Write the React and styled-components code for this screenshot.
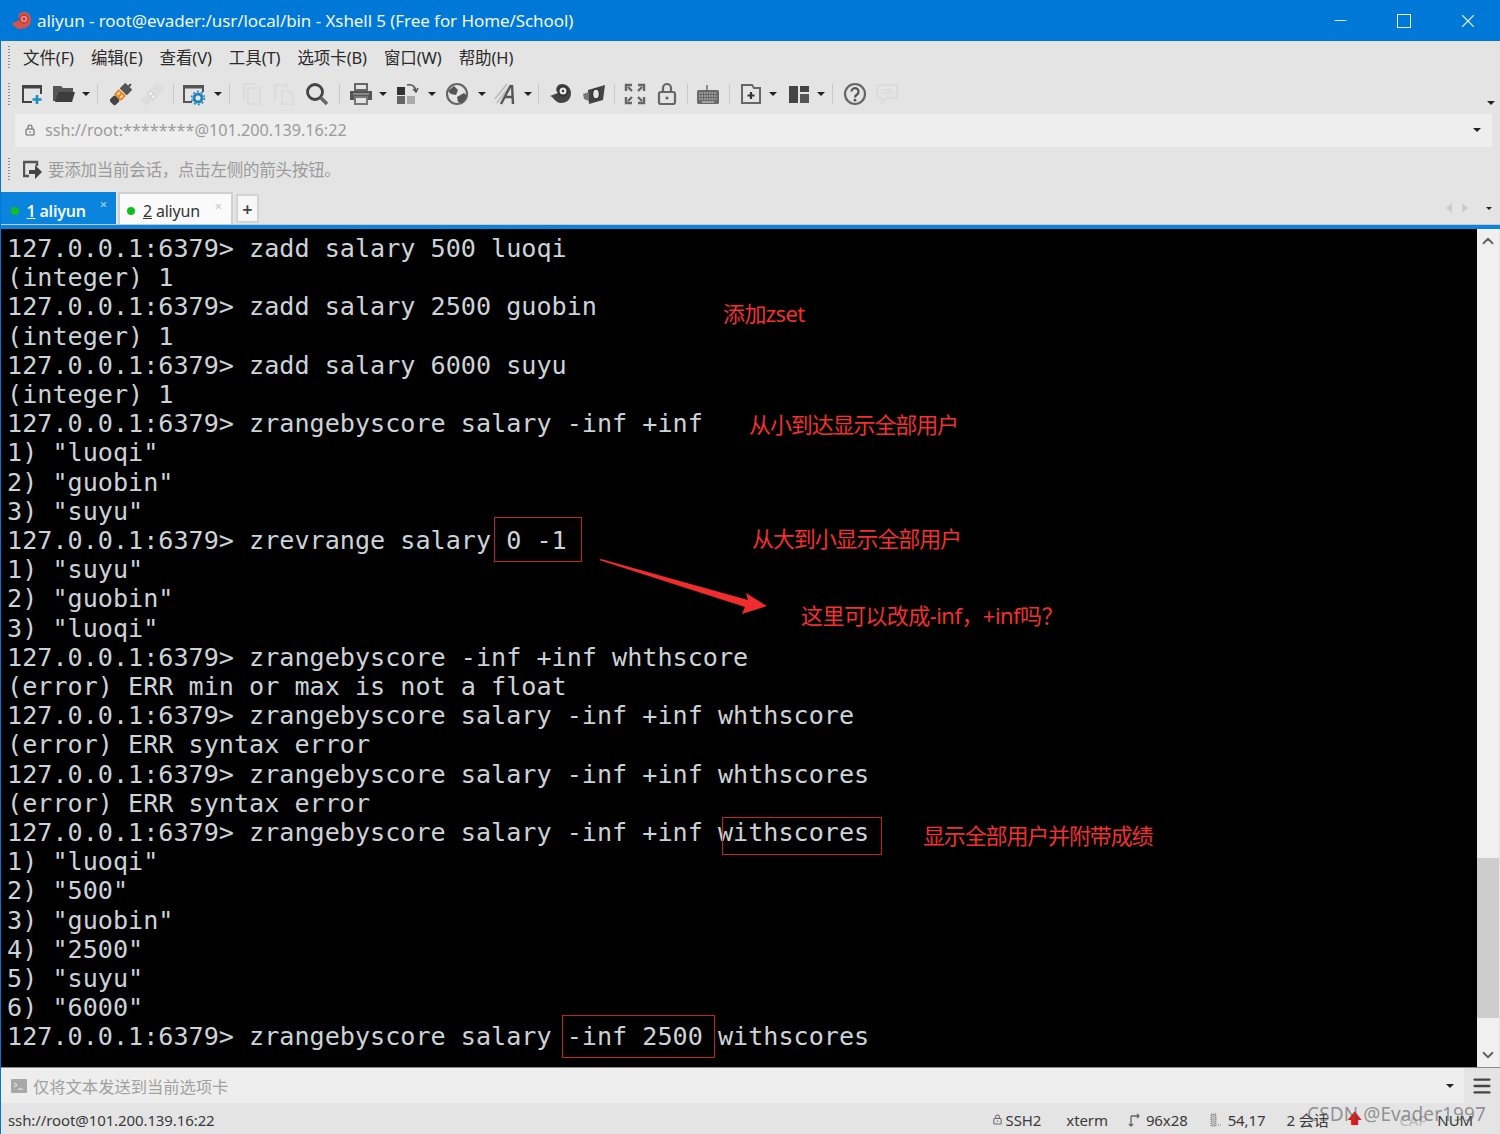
import React from 'react';
import styled, { createGlobalStyle } from 'styled-components';
import { Minus, X, ChevronUp, ChevronDown, Menu as MenuIcon } from 'lucide-react';

const UI_FONT = '"Noto Sans", "Noto Sans CJK SC", sans-serif';

const GlobalStyle = createGlobalStyle`
  html, body { margin: 0; padding: 0; background: #e4e4e4; }
  body { font-family: ${UI_FONT}; }
`;

const Window = styled.div`
  width: 1500px;
  height: 1134px;
  display: flex;
  flex-direction: column;
  overflow: hidden;
  background: #e4e4e4;
  border-left: 1px solid #0078d7;
  box-sizing: border-box;
`;

const TitleBar = styled.div`
  height: 41px;
  flex: none;
  margin-left: -1px;
  background: #0078d7;
  color: #f2f8fd;
  display: flex;
  align-items: center;
  padding-left: 11px;
  font-size: 17px;
  letter-spacing: -0.07px;
`;

const TitleText = styled.span`
  margin-left: 5px;
  flex: 1;
`;

const WinButton = styled.div`
  width: 64px;
  display: flex;
  justify-content: center;
  color: #e6f2fc;
`;

const WinSquare = styled.div`
  width: 14px;
  height: 14px;
  box-sizing: border-box;
  border: 1px solid #e6f2fc;
`;

const Bar = styled.div`
  height: ${(p) => p.$h}px;
  flex: none;
  display: flex;
  align-items: center;
  position: relative;
  padding-left: ${(p) => p.$pl || 0}px;
  padding-top: ${(p) => p.$pt || 0}px;
  box-sizing: border-box;
`;

const Grip = styled.div`
  width: 2px;
  height: ${(p) => p.$h}px;
  flex: none;
  background-image: linear-gradient(#8d8d8d 50%, transparent 50%);
  background-size: 2px 3px;
  margin-right: ${(p) => p.$mr}px;
`;

const MenuItem = styled.span`
  font-size: 16.5px;
  color: #2b2b2b;
  margin-right: 17px;
  letter-spacing: -0.1px;
`;

const ToolSlot = styled.div`
  width: ${(p) => p.$w}px;
  height: 26px;
  flex: none;
  display: flex;
  align-items: center;
  justify-content: center;
`;

const ToolSep = styled.div`
  width: 1px;
  height: 20px;
  flex: none;
  background: #c9c9c9;
  margin: 0 ${(p) => p.$m || 10}px;
`;

const Caret = styled.i`
  display: block;
  flex: none;
  width: 0;
  height: 0;
  border-left: ${(p) => p.$s || 4}px solid transparent;
  border-right: ${(p) => p.$s || 4}px solid transparent;
  border-top: ${(p) => p.$s || 4}px solid #222;
  margin-left: ${(p) => p.$ml || 0}px;
  margin-right: ${(p) => p.$mr || 0}px;
`;

const OverflowCaret = styled(Caret)`
  position: absolute;
  right: 5px;
  bottom: ${(p) => p.$b}px;
`;

const AddressField = styled.div`
  width: 1477px;
  height: 33px;
  margin-left: 14px;
  flex: none;
  background: #eeeeee;
  display: flex;
  align-items: center;
  padding: 0 11px 0 9px;
  box-sizing: border-box;
  color: #9a9a9a;
  font-size: 16.2px;
  letter-spacing: 0;
`;

const AddressText = styled.span`
  flex: 1;
  margin-left: 9px;
`;

const HintText = styled.span`
  color: #9b9b9b;
  font-size: 16.5px;
  letter-spacing: -0.25px;
  margin-left: 5px;
  margin-top: -2px;
`;

const TabStrip = styled.div`
  height: 33px;
  flex: none;
  display: flex;
  align-items: stretch;
  position: relative;
  border-bottom: 1px solid #c8c8c8;
  box-sizing: border-box;
`;

const Tab = styled.div`
  width: 115px;
  margin-right: 2px;
  box-sizing: border-box;
  display: flex;
  align-items: center;
  padding: ${(p) => (p.$active ? '5px 0 0 9.5px' : '3px 0 0 7px')};
  position: relative;
  font-size: 16px;
  letter-spacing: -0.2px;
  background: ${(p) => (p.$active ? '#0a84dc' : '#fafafa')};
  color: ${(p) => (p.$active ? '#f3f9fe' : '#333')};
  font-weight: ${(p) => (p.$active ? 600 : 400)};
  border: ${(p) => (p.$active ? 'none' : '2px solid #d0d0d0')};
  border-bottom: none;
`;

const Dot = styled.span`
  width: 8px;
  height: 8px;
  border-radius: 50%;
  background: #10c020;
  margin-right: 8px;
  flex: none;
`;

const TabClose = styled.span`
  position: absolute;
  right: 9px;
  top: 6px;
  font-size: 13px;
  line-height: 1;
  color: ${(p) => (p.$active ? '#9fd0f2' : '#c8c8c8')};
`;

const AddTab = styled.div`
  width: 23px;
  height: 29px;
  margin-left: 1px;
  align-self: flex-start;
  margin-top: 2px;
  box-sizing: border-box;
  background: #f7f7f7;
  border: 2px solid #d4d4d4;
  display: flex;
  align-items: center;
  justify-content: center;
  font-size: 18px;
  font-weight: 600;
  color: #444;
`;

const TabArrows = styled.div`
  position: absolute;
  right: 8px;
  top: 11px;
  display: flex;
  align-items: center;
`;

const SideArrow = styled.i`
  display: block;
  width: 0;
  height: 0;
  border-top: 5px solid transparent;
  border-bottom: 5px solid transparent;
  ${(p) => (p.$left ? 'border-right: 6px solid #cbcbcb;' : 'border-left: 6px solid #cbcbcb;')}
  margin-right: ${(p) => p.$mr}px;
`;

const BlueRule = styled.div`
  height: 4px;
  flex: none;
  background: #0a84dc;
  margin-left: -1px;
`;

const TermRow = styled.div`
  height: 838px;
  flex: none;
  display: flex;
  position: relative;
`;

const Terminal = styled.pre`
  flex: 1;
  margin: 0;
  padding: 5px 0 0 6px;
  background: #000;
  color: #ccd3d8;
  font-family: "DejaVu Sans Mono", monospace;
  font-size: 25.14px;
  line-height: 29.2px;
  overflow: hidden;
`;

const ScrollBar = styled.div`
  width: 22px;
  flex: none;
  margin-right: 1px;
  background: #f0f0f0;
  display: flex;
  flex-direction: column;
  align-items: center;
  justify-content: space-between;
  position: relative;
  color: #606060;
  padding: 3px 0;
  box-sizing: border-box;
`;

const ScrollThumb = styled.div`
  position: absolute;
  left: 0;
  right: 0;
  top: 629px;
  height: 160px;
  background: #cdcdcd;
`;

const RedBox = styled.div`
  position: absolute;
  left: ${(p) => p.$x}px;
  top: ${(p) => p.$y}px;
  width: ${(p) => p.$w}px;
  height: ${(p) => p.$h}px;
  border: 1px solid #c22024;
  box-sizing: border-box;
`;

const Note = styled.div`
  position: absolute;
  left: ${(p) => p.$x}px;
  top: ${(p) => p.$y}px;
  color: #f23030;
  font-size: 22px;
  line-height: 30px;
  letter-spacing: ${(p) => p.$ls}px;
  white-space: nowrap;
`;

const ArrowMark = styled.svg`
  position: absolute;
  left: 595px;
  top: 328px;
`;

const ComposeBar = styled.div`
  height: 36px;
  flex: none;
  display: flex;
  align-items: stretch;
  border-top: 1px solid #8a8a8a;
  box-sizing: border-box;
`;

const ComposeField = styled.div`
  flex: 1;
  background: #eeeeee;
  display: flex;
  align-items: center;
  padding: 1px 10px 0 10px;
  color: #a0a0a0;
  font-size: 16.3px;
  letter-spacing: 0;
`;

const ComposeText = styled.span`
  flex: 1;
  margin-left: 6px;
`;

const ComposeMenu = styled.div`
  width: 36px;
  flex: none;
  display: flex;
  align-items: center;
  justify-content: center;
  color: #444;
`;

const StatusBar = styled.div`
  height: 31px;
  flex: none;
  display: flex;
  align-items: center;
  padding: 2px 0 0 7px;
  box-sizing: border-box;
  font-size: 15px;
  letter-spacing: -0.1px;
  color: #3a3a3a;
  position: relative;
`;

const StatusPath = styled.span`
  flex: 1;
`;

const StatusItem = styled.span`
  display: flex;
  align-items: center;
  gap: ${(p) => p.$gap || 0}px;
  margin-right: ${(p) => p.$mr}px;
  color: ${(p) => p.$color || 'inherit'};
`;

const Watermark = styled.div`
  position: absolute;
  right: 14px;
  top: -2px;
  font-size: 19px;
  letter-spacing: 0.1px;
  color: rgba(90, 90, 90, 0.62);
  white-space: nowrap;
`;

const Glyph = ({ w = 24, h = 24, children, ...rest }) => (
  <svg width={w} height={h} viewBox={`0 0 ${w} ${h}`} fill="none" {...rest}>
    {children}
  </svg>
);

const Logo = () => (
  <Glyph w={21} h={20}>
    <path d="M0 13c3 0 4 5 9 5 6 0 11-3 11-9 0-5-3-8-7-8-4 0-6 3-5 6 1 2 4 2 5 0" fill="#d9534a" />
    <circle cx="13" cy="8" r="4" fill="#ee8a80" stroke="#b23a34" strokeWidth="1.4" />
    <circle cx="13" cy="8" r="1.4" fill="#b23a34" />
  </Glyph>
);

const NewIcon = () => (
  <Glyph>
    <path d="M12 20H3V4h18v8" stroke="#444" strokeWidth="2" />
    <path d="M3 5h18" stroke="#444" strokeWidth="3" />
    <path d="M17 13v9M12.5 17.5h9" stroke="#1b8fc4" strokeWidth="2.6" />
  </Glyph>
);

const OpenIcon = () => (
  <Glyph>
    <path d="M1 4h8l2 2h10v4H6l-2 9H1z" fill="#555" />
    <path d="M6 10h17l-3 10H3z" fill="#3d3d3d" />
  </Glyph>
);

const PlugIcon = ({ on }) => (
  <Glyph>
    <g transform="rotate(-45 12 12)">
      <rect x="-1" y="8" width="8" height="8" rx="2.5" fill={on ? '#444' : '#dcdcdc'} />
      <rect x="7" y="7" width="7" height="10" fill={on ? '#ee8a22' : '#d8d8d8'} />
      <path d="M9 10h3M9 14h3" stroke="#fff" strokeWidth="1.4" />
      <rect x="15" y="7" width="8" height="10" rx="1" fill={on ? '#555' : '#dedede'} />
      <path d="M23 12h3" stroke={on ? '#444' : '#ddd'} strokeWidth="2" />
    </g>
  </Glyph>
);

const PropsIcon = () => (
  <Glyph>
    <path d="M10 20H2V4h19v6" stroke="#555" strokeWidth="2" />
    <path d="M2 5h19" stroke="#555" strokeWidth="3" />
    <circle cx="16" cy="16" r="4" stroke="#2284bb" strokeWidth="3" />
    <circle cx="16" cy="16" r="6.5" stroke="#2284bb" strokeWidth="1.5" strokeDasharray="2 2.1" />
  </Glyph>
);

const CopyIcon = () => (
  <Glyph>
    <path d="M4 18V2h11M8 6h12v16H8z" stroke="#dcdcdc" strokeWidth="2" />
  </Glyph>
);

const PasteIcon = () => (
  <Glyph>
    <path d="M3 18V3h11v4" stroke="#dcdcdc" strokeWidth="3" />
    <path d="M10 9h7l4 4v9H10z" stroke="#dcdcdc" strokeWidth="2" />
  </Glyph>
);

const FindIcon = () => (
  <Glyph>
    <circle cx="10" cy="10" r="7.5" stroke="#444" strokeWidth="2.8" />
    <path d="M15.5 15.5L22 22" stroke="#666" strokeWidth="3.6" />
  </Glyph>
);

const PrintIcon = () => (
  <Glyph>
    <path d="M6 2h12v6H6z" stroke="#666" strokeWidth="2" />
    <path d="M1 9h22v9H1z" fill="#555" />
    <path d="M6 15h12v7H6z" fill="#e4e4e4" stroke="#777" strokeWidth="2" />
    <path d="M4 12h16" stroke="#bbb" />
  </Glyph>
);

const TransferIcon = () => (
  <Glyph>
    <rect x="2" y="5" width="8" height="8" fill="#333" />
    <rect x="2" y="14" width="8" height="8" fill="#666" />
    <rect x="12" y="14" width="8" height="8" fill="#aaa" />
    <path d="M12 3c5-1 8 1 9 6M18 7l3 3 2-4" stroke="#555" strokeWidth="1.6" />
  </Glyph>
);

const GlobeIcon = () => (
  <Glyph>
    <circle cx="12" cy="12" r="10" fill="#e4e4e4" stroke="#666" strokeWidth="2.2" />
    <path d="M3 9l6-5 4 4-2 5-5-1zM12 15l7-4 3 3-5 7-4-1z" fill="#555" />
  </Glyph>
);

const FontIcon = () => (
  <Glyph>
    <path d="M1 17L13 2M3 21L15 5" stroke="#bdbdbd" strokeWidth="1.8" />
    <path d="M18 3l1 19M7 22l10-19M10 15h8" stroke="#555" strokeWidth="2.4" />
  </Glyph>
);

const SnailIcon = () => (
  <Glyph>
    <path d="M1 14c4 1 5 7 11 7 6 0 10-4 10-10 0-5-4-9-9-9-5 0-7 5-5 8 2 2 5 1 6-1" fill="#444" />
    <circle cx="14" cy="9" r="4.5" fill="#e4e4e4" stroke="#333" strokeWidth="2" />
    <circle cx="14" cy="9" r="1.2" fill="#333" />
  </Glyph>
);

const XftpIcon = () => (
  <Glyph>
    <path d="M6 8l17-5-2 15-14 4z" fill="#444" />
    <path d="M1 12l6-2v9l-5-2z" fill="#777" />
    <ellipse cx="14" cy="12" rx="3.5" ry="5" fill="#e4e4e4" stroke="#333" strokeWidth="1.4" />
  </Glyph>
);

const FullIcon = () => (
  <Glyph>
    <path d="M3 9V3h6M15 3h6v6M21 15v6h-6M9 21H3v-6" stroke="#666" strokeWidth="2.4" />
    <path d="M5 5l4 4M19 5l-4 4M19 19l-4-4M5 19l4-4" stroke="#666" strokeWidth="2.4" />
  </Glyph>
);

const LockIcon = ({ size = 24, color = '#666' }) => (
  <svg width={size} height={size} viewBox="0 0 24 24" fill="none">
    <rect x="4" y="10" width="16" height="12" rx="2" stroke={color} strokeWidth="2.2" />
    <path d="M8 10V6a4 4 0 0 1 8 0v4" stroke={color} strokeWidth="2.2" />
    <circle cx="12" cy="16" r="1.6" fill={color} />
  </svg>
);

const KeyboardIcon = () => (
  <Glyph>
    <path d="M11 8V3" stroke="#777" strokeWidth="1.6" />
    <rect x="1" y="8" width="22" height="14" rx="1.5" fill="#6a6a6a" />
    <path d="M3 11h18M3 14h18M3 17h18" stroke="#d8d8d8" strokeDasharray="1.5 1" />
    <path d="M6 20h12" stroke="#ddd" />
  </Glyph>
);

const AddFolderIcon = () => (
  <Glyph>
    <path d="M3 3h10l2 3h6v15H3z" stroke="#666" strokeWidth="2" />
    <path d="M12 10v7M8.5 13.5h7" stroke="#333" strokeWidth="2.2" />
  </Glyph>
);

const LayoutIcon = () => (
  <Glyph>
    <path d="M2 4h9v17H2z" fill="#444" />
    <path d="M13 4h9v6h-9z" fill="#444" />
    <path d="M13 12h9v9h-9z" fill="#555" />
  </Glyph>
);

const HelpIcon = () => (
  <Glyph>
    <circle cx="12" cy="12" r="10" stroke="#666" strokeWidth="2.2" />
    <path d="M8.5 9.5a3.5 3.5 0 1 1 5.5 3c-1.3.9-2 1.4-2 3" stroke="#555" strokeWidth="2.2" />
    <circle cx="12" cy="18.2" r="1.4" fill="#555" />
  </Glyph>
);

const ChatIcon = () => (
  <Glyph>
    <path d="M2 3h20v13H11l-4 5v-5H2z" stroke="#dcdcdc" strokeWidth="2" />
    <path d="M6 8h12M6 11h12" stroke="#dcdcdc" strokeWidth="1.6" />
  </Glyph>
);

const SessionArrowIcon = () => (
  <Glyph w={20} h={20}>
    <path d="M6 16H1V2h13v4" stroke="#555" strokeWidth="2.4" />
    <path d="M6 10h6V5l7 7-7 7v-5H6z" fill="#444" />
  </Glyph>
);

const PromptIcon = () => (
  <Glyph w={16} h={14}>
    <rect width="16" height="14" rx="1" fill="#a8a8a8" />
    <path d="M3 4l3 2-3 2M7 10h5" stroke="#eee" />
  </Glyph>
);

const ResizeIcon = () => (
  <Glyph w={12} h={14}>
    <path d="M3 3v10M1 11l2 2 2-2M3 3h8M9 1l2 2-2 2" stroke="#666" strokeWidth="1.3" />
  </Glyph>
);

const CursorIcon = () => (
  <Glyph w={12} h={14}>
    <path d="M1 1h5v12H1z" fill="#bbb" stroke="#777" strokeDasharray="1 1" />
    <path d="M8 12h4" stroke="#888" strokeDasharray="1 1" />
  </Glyph>
);

const menus = ['文件(F)', '编辑(E)', '查看(V)', '工具(T)', '选项卡(B)', '窗口(W)', '帮助(H)'];

// w is the slot width, after is extra room behind a caret
const tools = [
  { icon: <NewIcon />, w: 32 },
  { icon: <OpenIcon />, w: 32, caret: true },
  { sep: true, m: 7 },
  { icon: <PlugIcon on />, w: 32 },
  { icon: <PlugIcon />, w: 32 },
  { sep: true, m: 4 },
  { icon: <PropsIcon />, w: 32, caret: true, gap: 4 },
  { sep: true, m: 6.5 },
  { icon: <CopyIcon />, w: 32 },
  { icon: <PasteIcon />, w: 32 },
  { icon: <FindIcon />, w: 33 },
  { sep: true, m: 5.5 },
  { icon: <PrintIcon />, w: 32, caret: true, after: 4 },
  { icon: <TransferIcon />, w: 32, caret: true, gap: 5, after: 5 },
  { icon: <GlobeIcon />, w: 32, caret: true, gap: 5, after: 4 },
  { icon: <FontIcon />, w: 32, caret: true, gap: 2 },
  { sep: true, m: 6 },
  { icon: <SnailIcon />, w: 32 },
  { icon: <XftpIcon />, w: 33 },
  { sep: true, m: 4 },
  { icon: <FullIcon />, w: 32 },
  { icon: <LockIcon />, w: 32 },
  { sep: true, m: 4 },
  { icon: <KeyboardIcon />, w: 32 },
  { sep: true, m: 5 },
  { icon: <AddFolderIcon />, w: 32, caret: true, after: 6 },
  { icon: <LayoutIcon />, w: 32, caret: true, gap: 2 },
  { sep: true, m: 6.5 },
  { icon: <HelpIcon />, w: 32 },
  { icon: <ChatIcon />, w: 32 },
];

const termLines = `127.0.0.1:6379> zadd salary 500 luoqi
(integer) 1
127.0.0.1:6379> zadd salary 2500 guobin
(integer) 1
127.0.0.1:6379> zadd salary 6000 suyu
(integer) 1
127.0.0.1:6379> zrangebyscore salary -inf +inf
1) "luoqi"
2) "guobin"
3) "suyu"
127.0.0.1:6379> zrevrange salary 0 -1
1) "suyu"
2) "guobin"
3) "luoqi"
127.0.0.1:6379> zrangebyscore -inf +inf whthscore
(error) ERR min or max is not a float
127.0.0.1:6379> zrangebyscore salary -inf +inf whthscore
(error) ERR syntax error
127.0.0.1:6379> zrangebyscore salary -inf +inf whthscores
(error) ERR syntax error
127.0.0.1:6379> zrangebyscore salary -inf +inf withscores
1) "luoqi"
2) "500"
3) "guobin"
4) "2500"
5) "suyu"
6) "6000"
127.0.0.1:6379> zrangebyscore salary -inf 2500 withscores`;

const notes = [
  { x: 722, y: 69, ls: -0.6, text: '添加zset' },
  { x: 748, y: 180, ls: -1.1, text: '从小到达显示全部用户' },
  { x: 751, y: 294, ls: -1.1, text: '从大到小显示全部用户' },
  { x: 800, y: 371, ls: -0.55, text: '这里可以改成-inf，+inf吗？' },
  { x: 922, y: 591, ls: -1.15, text: '显示全部用户并附带成绩' },
];

const boxes = [
  { x: 493, y: 288, w: 88, h: 45 },
  { x: 721, y: 588, w: 160, h: 38 },
  { x: 561, y: 786, w: 153, h: 43 },
];

export default function App() {
  return (
    <>
      <GlobalStyle />
      <Window>
        <TitleBar>
          <Logo />
          <TitleText>aliyun - root@evader:/usr/local/bin - Xshell 5 (Free for Home/School)</TitleText>
          <WinButton><Minus size={19} strokeWidth={1.2} /></WinButton>
          <WinButton><WinSquare /></WinButton>
          <WinButton><X size={22} strokeWidth={1.2} /></WinButton>
        </TitleBar>

        <Bar $h={31} $pl={7}>
          <Grip $h={22} $mr={13} />
          {menus.map((m) => <MenuItem key={m}>{m}</MenuItem>)}
        </Bar>

        <Bar $h={41} $pl={7} $pt={3}>
          <Grip $h={22} $mr={6} />
          {tools.map((t, i) =>
            t.sep ? (
              <ToolSep key={i} $m={t.m} />
            ) : (
              <React.Fragment key={i}>
                <ToolSlot $w={t.w}>{t.icon}</ToolSlot>
                {t.caret && <Caret $ml={t.gap || 2} $mr={t.after} />}
              </React.Fragment>
            )
          )}
          <OverflowCaret $b={8} />
        </Bar>

        <Bar $h={34}>
          <AddressField>
            <LockIcon size={12} />
            <AddressText>ssh://root:********@101.200.139.16:22</AddressText>
            <Caret />
          </AddressField>
        </Bar>

        <Bar $h={45} $pl={7}>
          <Grip $h={24} $mr={13} />
          <SessionArrowIcon />
          <HintText>要添加当前会话，点击左侧的箭头按钮。</HintText>
        </Bar>

        <TabStrip>
          <Tab $active>
            <Dot />
            <span><u>1</u> aliyun</span>
            <TabClose $active>×</TabClose>
          </Tab>
          <Tab>
            <Dot />
            <span><u>2</u> aliyun</span>
            <TabClose>×</TabClose>
          </Tab>
          <AddTab>+</AddTab>
          <TabArrows>
            <SideArrow $left $mr={10} />
            <SideArrow $mr={18} />
            <Caret $s={3} />
          </TabArrows>
        </TabStrip>
        <BlueRule />

        <TermRow>
          <Terminal>{termLines}</Terminal>
          <ScrollBar>
            <ChevronUp size={18} strokeWidth={2.4} />
            <ScrollThumb />
            <ChevronDown size={18} strokeWidth={2.4} />
          </ScrollBar>
          {boxes.map((b) => <RedBox key={b.x} $x={b.x} $y={b.y} $w={b.w} $h={b.h} />)}
          {notes.map((n) => <Note key={n.x} $x={n.x} $y={n.y} $ls={n.ls}>{n.text}</Note>)}
          <ArrowMark width="175" height="60" viewBox="0 0 175 60">
            <path d="M3 3L5 2L152 43L150 36L171 49L146 57L149 50Z" fill="#f02c2c" />
          </ArrowMark>
        </TermRow>

        <ComposeBar>
          <ComposeField>
            <PromptIcon />
            <ComposeText>仅将文本发送到当前选项卡</ComposeText>
            <Caret />
          </ComposeField>
          <ComposeMenu><MenuIcon size={22} strokeWidth={2.6} /></ComposeMenu>
        </ComposeBar>

        <StatusBar>
          <StatusPath>ssh://root@101.200.139.16:22</StatusPath>
          <StatusItem $gap={3} $mr={25}><LockIcon size={11} />SSH2</StatusItem>
          <StatusItem $mr={20}>xterm</StatusItem>
          <StatusItem $gap={6} $mr={22}><ResizeIcon />96x28</StatusItem>
          <StatusItem $gap={6} $mr={21}><CursorIcon />54,17</StatusItem>
          <StatusItem $mr={18}>2 会话</StatusItem>
          <StatusItem $color="#e01818" $mr={38}>🡅</StatusItem>
          <StatusItem $color="#b8b8b8" $mr={10}>CAP</StatusItem>
          <StatusItem $mr={27}>NUM</StatusItem>
          <Watermark>CSDN @Evader1997</Watermark>
        </StatusBar>
      </Window>
    </>
  );
}
